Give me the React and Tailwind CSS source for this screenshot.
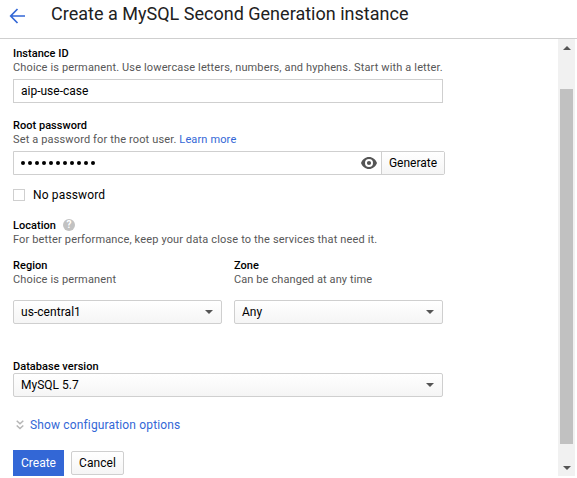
import React from "react";

function Caret({ up = false, className = "" }) {
  return (
    <svg width="8" height="4" viewBox="0 0 8 4" className={className}>
      <path d={up ? "M0 4L4 0L8 4Z" : "M0 0H8L4 4Z"} fill="#555" />
    </svg>
  );
}

function Label({ children, className = "" }) {
  return (
    <div className={`h-[14px] whitespace-nowrap text-[11px] leading-[16px] font-medium tracking-[0.03px] text-black ${className}`}>
      {children}
    </div>
  );
}

function Hint({ children, className = "tracking-[0.14px]" }) {
  return (
    <div className={`h-[14px] whitespace-nowrap text-[11px] leading-[16px] text-[#575757] ${className}`}>
      {children}
    </div>
  );
}

function Select({ value, className = "" }) {
  return (
    <div
      className={`flex h-6 items-center justify-between rounded-[2px] border border-[#cfcfcf] bg-linear-to-b from-white to-[#f5f5f5] pr-2 pl-[7px] text-[12px] leading-[22px] ${className}`}
    >
      <span>{value}</span>
      <Caret />
    </div>
  );
}

export default function App() {
  return (
    <div className="flex h-[478px] w-[577px] flex-col overflow-hidden bg-white font-[Roboto,sans-serif] text-black">
      <header className="flex h-[39px] shrink-0 border-b border-[#cfcfcf]">
        <svg width="18" height="16" viewBox="0 0 18 16" className="mt-2 ml-[9px] shrink-0" fill="none" stroke="#3367d6" strokeWidth="1.7">
          <path d="M16 8H2M8.5 1L1.7 8L8.5 15" />
        </svg>
        <h1 className="ml-6 h-7 text-[18px] leading-7 tracking-[0.01px] whitespace-nowrap text-[#212121]">
          Create a MySQL Second Generation instance
        </h1>
      </header>

      <div className="flex h-[437px] justify-between pr-[2px]">
        <main className="w-[432px] pt-[7px] ml-[13px]">
          <Label>Instance ID</Label>
          <Hint>Choice is permanent. Use lowercase letters, numbers, and hyphens. Start with a letter.</Hint>
          <div className="mt-[5px] h-6 w-[430px] border border-[#cfcfcf] pl-[7px] text-[12px] leading-[22px]">aip-use-case</div>

          <Label className="mt-[15px]">Root password</Label>
          <Hint>
            Set a password for the root user. <a className="text-[#3367d6]">Learn more</a>
          </Hint>
          <div className="mt-[5px] flex h-6 w-[432px] rounded-r-[2px] border border-[#cfcfcf]">
            <div className="flex flex-1 items-center justify-between pr-1 pl-[7px]">
              <div className="flex gap-[3px]">
                {Array.from({ length: 11 }, (_, i) => (
                  <i key={i} className="size-1 rounded-full bg-black" />
                ))}
              </div>
              <svg width="16" height="12" viewBox="0 0 16 12">
                <path fillRule="evenodd" fill="#555" d="M8 0C4.4 0 1.3 2.4 0 6c1.3 3.6 4.4 6 8 6s6.700-2.400 8-6c-1.300-3.600-4.400-6-8-6zM8 10a4 4 0 1 1 0-8a4 4 0 0 1 0 8zM8 3.900a2.100 2.100 0 1 0 0 4.200a2.100 2.100 0 0 0 0-4.200z" />
              </svg>
            </div>
            <div className="w-[63px] border-l border-[#cfcfcf] bg-linear-to-b from-white to-[#f5f5f5] text-center text-[12px] leading-[22px]">
              Generate
            </div>
          </div>

          <div className="mt-[13px] flex h-[14px] items-center">
            <span className="size-3 border border-[#cfcfcf]" />
            <span className="ml-2 text-[12px] leading-[14px] tracking-[0.15px]">No password</span>
          </div>

          <div className="mt-4 flex items-center">
            <Label>Location</Label>
            <span className="ml-[7px] flex size-3 items-center justify-center rounded-full bg-[#c2c2c2] text-[10px] leading-3 font-bold text-white">?</span>
          </div>
          <Hint className="tracking-[0.15px]">For better performance, keep your data close to the services that need it.</Hint>

          <div className="mt-3 flex gap-3">
            <div className="w-[209px]">
              <Label>Region</Label>
              <Hint>Choice is permanent</Hint>
              <Select value="us-central1" className="mt-[14px] tracking-[0.05px]" />
            </div>
            <div className="w-[209px]">
              <Label>Zone</Label>
              <Hint className="tracking-[0.1px]">Can be changed at any time</Hint>
              <Select value="Any" className="mt-[14px]" />
            </div>
          </div>

          <Label className="mt-[35px]">Database version</Label>
          <Select value="MySQL 5.7" className="w-[430px]" />

          <div className="mt-5 flex h-4 items-center">
            <svg width="8" height="10" viewBox="0 0 8 10" className="ml-[3px]" fill="none" stroke="#b5b5b5" strokeWidth="1.5">
              <path d="M.7 .8L4 3.800L7.300 .8M.7 5.500L4 8.500L7.300 5.500" />
            </svg>
            <a className="ml-[6px] text-[12px] leading-4 tracking-[0.15px] text-[#3367d6]">Show configuration options</a>
          </div>

          <div className="mt-[17px] flex items-center gap-[7px]">
            <button className="h-[26px] w-[51px] bg-[#3367d6] text-[12px] leading-[26px] text-white">Create</button>
            <button className="h-6 w-[53px] rounded-[2px] border border-[#cfcfcf] bg-linear-to-b from-white to-[#f5f5f5] text-[12px] leading-[22px] tracking-[0.05px]">
              Cancel
            </button>
          </div>
        </main>

        <div className="flex w-[17px] flex-col items-center bg-[#f1f1f1]">
          <Caret up className="mt-[7px]" />
          <div className="mt-[39px] h-[355px] w-[13px] bg-[#c1c1c1]" />
          <Caret className="mt-[22px]" />
        </div>
      </div>
    </div>
  );
}
